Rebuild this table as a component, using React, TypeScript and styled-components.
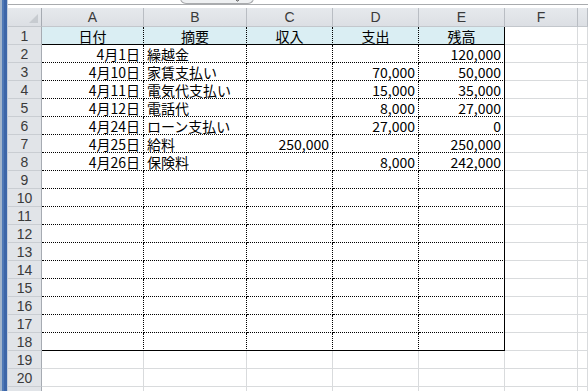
import React from "react";
import styled, { createGlobalStyle, css } from "styled-components";

// Sheet data
const columns = ["A", "B", "C", "D", "E", "F", ""];
const widths = [34, 102, 103, 86, 86, 86, 73];

type Row = { date: string; memo: string; income: string; expense: string; balance: string };

const entries: Row[] = [
  { date: "4月1日", memo: "繰越金", income: "", expense: "", balance: "120,000" },
  { date: "4月10日", memo: "家賃支払い", income: "", expense: "70,000", balance: "50,000" },
  { date: "4月11日", memo: "電気代支払い", income: "", expense: "15,000", balance: "35,000" },
  { date: "4月12日", memo: "電話代", income: "", expense: "8,000", balance: "27,000" },
  { date: "4月24日", memo: "ローン支払い", income: "", expense: "27,000", balance: "0" },
  { date: "4月25日", memo: "給料", income: "250,000", expense: "", balance: "250,000" },
  { date: "4月26日", memo: "保険料", income: "", expense: "8,000", balance: "242,000" },
];

const headings = ["日付", "摘要", "収入", "支出", "残高"];
const TABLE_LAST_ROW = 18;
const VISIBLE_ROWS = 20;
const ROW_COUNT = 21; // row 21 only peeks in at the bottom edge

function cellText(row: number, col: number) {
  if (row === 1) return headings[col] ?? "";
  const e = entries[row - 2];
  if (!e) return "";
  return [e.date, e.memo, e.income, e.expense, e.balance][col] ?? "";
}

export default function App() {
  const rows = Array.from({ length: ROW_COUNT }, (_, i) => i + 1);

  return (
    <Window>
      <GlobalStyle />
      <Frame />
      <Main>
        <FormulaStrip>
          <ExpandTab>
            <svg width="7" height="4" viewBox="0 0 7 4">
              <path d="M0.5 0.5 L3.5 3 L6.5 0.5" stroke="#333" strokeWidth="1" fill="none" />
            </svg>
          </ExpandTab>
        </FormulaStrip>
        <Sheet $widths={widths}>
          <Corner>
            <CornerMark />
          </Corner>
          {columns.map((c, ci) => (
            <ColHead key={ci}>{c && <HeadText>{c}</HeadText>}</ColHead>
          ))}

          {rows.map((r) => (
            <React.Fragment key={r}>
              <RowHead>{r <= VISIBLE_ROWS && <HeadText>{r}</HeadText>}</RowHead>
              {columns.map((c, ci) => {
                const inTable = ci < 5 && r <= TABLE_LAST_ROW;
                const text = inTable ? cellText(r, ci) : "";
                const align = r === 1 ? "center" : ci === 1 ? "flex-start" : "flex-end";
                return (
                  <Cell
                    key={ci}
                    $table={inTable}
                    $head={inTable && r === 1}
                    $rightSolid={ci === 4}
                    $bottomSolid={r === 1 || r === TABLE_LAST_ROW}
                    $align={align}>
                    {text && <CellText>{text}</CellText>}
                  </Cell>
                );
              })}
            </React.Fragment>
          ))}
        </Sheet>
      </Main>
    </Window>
  );
}

const GlobalStyle = createGlobalStyle`
  html, body {
    margin: 0;
    padding: 0;
    background: #ffffff;
    overflow: hidden;
  }
`;

const Window = styled.div`
  display: flex;
  width: 588px;
  height: 391px;
  overflow: hidden;
  font-family: "Noto Sans CJK JP", "Liberation Sans", sans-serif;
`;

const Frame = styled.div`
  flex: 0 0 8px;
  background: linear-gradient(
    to right,
    #a3b5cb 0 2px,
    #4f79b6 2px 4px,
    #3d66a8 4px 7px,
    #c3cfde 7px 8px
  );
`;

const Main = styled.div`
  flex: 1;
  display: flex;
  flex-direction: column;
  min-width: 0;
`;

const FormulaStrip = styled.div`
  position: relative;
  flex: 0 0 4px;
  border-bottom: 1px solid #a9abae;
  margin-bottom: 3px;
`;

const ExpandTab = styled.div`
  position: absolute;
  left: 172px;
  top: -2px;
  width: 74px;
  height: 6px;
  box-sizing: border-box;
  border: 1px solid #a9abae;
  border-top: none;
  border-radius: 0 0 6px 6px;
  background: #eef0f2;
  display: flex;
  justify-content: flex-end;
  align-items: flex-end;
  padding: 0 12px 1px 0;
`;

const Sheet = styled.div<{ $widths: number[] }>`
  display: grid;
  grid-template-columns: ${(p) => p.$widths.map((w) => `${w}px`).join(" ")} 1fr;
  grid-template-rows: 19px;
  grid-auto-rows: 18px;
`;

const headBase = css`
  box-sizing: border-box;
  background: linear-gradient(to bottom, #e6e9ed, #dcdfe4);
  display: flex;
  align-items: center;
  justify-content: center;
  overflow: hidden;
`;

const HeadText = styled.span`
  font-family: "Liberation Sans", "Noto Sans CJK JP", sans-serif;
  font-size: 14px;
  line-height: 16px;
  color: #3a3a3a;
  white-space: nowrap;
`;

const Corner = styled.div`
  ${headBase};
  border-right: 1px solid #a6abb2;
  border-bottom: 1px solid #c3c7cc;
  justify-content: flex-end;
  align-items: flex-end;
  padding: 0 3px 3px 0;
`;

const CornerMark = styled.div`
  width: 0;
  height: 0;
  border-left: 9px solid transparent;
  border-bottom: 9px solid #c7cbd0;
`;

const ColHead = styled.div`
  ${headBase};
  border-right: 1px solid #b9bdc3;
  border-bottom: 1px solid #c3c7cc;
`;

const RowHead = styled.div`
  ${headBase};
  background: #e1e4e8;
  border-right: 1px solid #a6abb2;
  border-bottom: 1px solid #c9cdd2;
`;

const Cell = styled.div<{
  $table: boolean;
  $head: boolean;
  $rightSolid: boolean;
  $bottomSolid: boolean;
  $align: "flex-start" | "flex-end" | "center";
}>`
  box-sizing: border-box;
  min-width: 0;
  display: flex;
  align-items: center;
  justify-content: ${(p) => p.$align};
  padding: 0 3px;
  border-right: 1px solid #d9dbdd;
  border-bottom: 1px solid #d9dbdd;

  ${(p) =>
    p.$table &&
    css`
      border-right: 1px ${p.$rightSolid ? "solid" : "dotted"} #000000;
      border-bottom: 1px ${p.$bottomSolid ? "solid" : "dotted"} #000000;
    `}

  ${(p) =>
    p.$head &&
    css`
      background: #daeef3;
    `}
`;

const CellText = styled.span`
  font-size: 14px;
  line-height: 16px;
  white-space: nowrap;
  color: #000000;
  padding-top: 1px;
`;
